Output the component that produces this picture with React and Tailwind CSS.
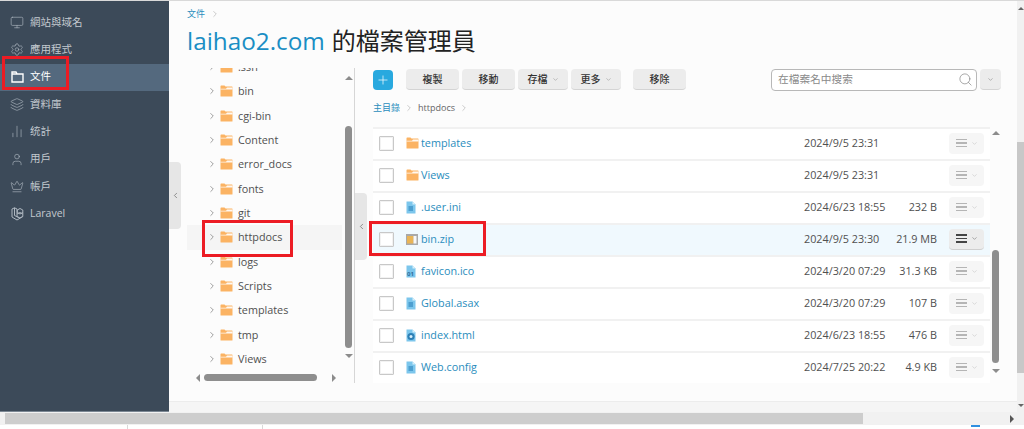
import React from "react";
import { Monitor, Settings, Layers, ChartNoAxesColumn, User, Crown, ChevronRight, ChevronLeft, ChevronDown, Search, Plus } from "lucide-react";

const font = { fontFamily: '"Open Sans","Noto Sans CJK TC",sans-serif' };

function FolderIcon({ className = "" }) {
  return (
    <svg width="13" height="12" viewBox="0 0 13 12" className={className}>
      <path d="M0.5 1.2 Q0.5 0.5 1.2 0.5 H4.5 L5.5 1.6 H12 Q12.5 1.6 12.5 2.2 V11 Q12.5 11.5 12 11.5 H1 Q0.5 11.5 0.5 11 Z" fill="#fbb363" />
      <path d="M0.5 3.7 H6 L7 2.6 H12.5 V4.4 H0.5 Z" fill="#fff" opacity="0.9" />
    </svg>
  );
}

function FileIcon({ kind }) {
  return (
    <svg width="10" height="13" viewBox="0 0 10 13">
      <path d="M0.5 0.5 H6.5 L9.5 3.5 V12.5 H0.5 Z" fill="#7cc6ec" />
      <path d="M6.5 0.5 L9.5 3.5 H6.5 Z" fill="#d7effa" />
      {kind === "text" && <rect x="2.5" y="5" width="4.5" height="5" fill="#4d9fd0" />}
      {kind === "bin" && <text x="1" y="10.5" fontSize="6" fontWeight="700" fill="#2f6f9c" fontFamily="Open Sans">01</text>}
      {kind === "html" && (
        <>
          <circle cx="5" cy="7.5" r="3.6" fill="#2d7fb5" />
          <circle cx="5" cy="7.5" r="1.5" fill="#d7effa" />
        </>
      )}
    </svg>
  );
}

function ZipIcon() {
  return (
    <svg width="12" height="11" viewBox="0 0 12 11">
      <rect width="12" height="11" fill="#a9a9a9" />
      <rect x="1" y="2" width="6.5" height="7.5" fill="#e9b456" />
      <rect x="7.5" y="2" width="3" height="7.5" fill="#f7f7f7" />
    </svg>
  );
}

function LaravelIcon() {
  return (
    <svg width="13" height="14" viewBox="0 0 13 14" fill="none" stroke="#aeb7c0" strokeWidth="1">
      <path d="M1 2 L3.5 0.8 L6 2 V9.5 L8.8 11 L11.8 9.5 V7 L9 5.5 L6 7 M1 2 V10 L6 13 L11.8 9.5 M3.5 0.8 V8.5 L8.8 11 M9 1.5 L11.8 3 V7 M9 1.5 L6.3 3 V5.5 L9 7 L11.8 5.5" />
    </svg>
  );
}

function SideFolder() {
  return (
    <svg width="13" height="12" viewBox="0 0 13 12" fill="none" stroke="#fff" strokeWidth="1.4">
      <path d="M1 1 H5 L6.2 3 H12 V11 H1 Z M1 3 H6.2" />
    </svg>
  );
}

const nav = [
  { label: "網站與域名", icon: <Monitor size={15} strokeWidth={1.1} /> },
  { label: "應用程式", icon: <Settings size={15} strokeWidth={1.1} /> },
  { label: "文件", icon: <SideFolder />, active: true },
  { label: "資料庫", icon: <Layers size={15} strokeWidth={1.1} /> },
  { label: "统計", icon: <ChartNoAxesColumn size={15} strokeWidth={1.1} /> },
  { label: "用戶", icon: <User size={15} strokeWidth={1.1} /> },
  { label: "帳戶", icon: <Crown size={15} strokeWidth={1.1} /> },
  { label: "Laravel", icon: <LaravelIcon /> },
];

const tree = [".ssh", "bin", "cgi-bin", "Content", "error_docs", "fonts", "git", "httpdocs", "logs", "Scripts", "templates", "tmp", "Views"];

const files = [
  { name: "templates", type: "folder", date: "2024/9/5 23:31", size: "" },
  { name: "Views", type: "folder", date: "2024/9/5 23:31", size: "" },
  { name: ".user.ini", type: "text", date: "2024/6/23 18:55", size: "232 B" },
  { name: "bin.zip", type: "zip", date: "2024/9/5 23:30", size: "21.9 MB", active: true },
  { name: "favicon.ico", type: "bin", date: "2024/3/20 07:29", size: "31.3 KB" },
  { name: "Global.asax", type: "text", date: "2024/3/20 07:29", size: "107 B" },
  { name: "index.html", type: "html", date: "2024/6/23 18:55", size: "476 B" },
  { name: "Web.config", type: "text", date: "2024/7/25 20:22", size: "4.9 KB" },
];

function Btn({ label, w, caret }) {
  return (
    <div className={`flex items-center justify-center gap-1 h-[21px] ${w} bg-[#ececec] border-b border-[#d4d4d4] rounded-sm text-[10px] text-[#333] font-medium`}>
      <span>{label}</span>
      {caret && <ChevronDown size={7} strokeWidth={2} className="text-[#999]" />}
    </div>
  );
}

function Tri({ up }) {
  return (
    <div className={`w-0 h-0 border-l-[4px] border-r-[4px] border-l-transparent border-r-transparent ${up ? "border-b-[4px] border-b-[#8c8c8c]" : "border-t-[4px] border-t-[#8c8c8c]"}`} />
  );
}

function FileRow({ f }) {
  return (
    <div className={`flex items-center h-8 border-t-2 pb-[2px] border-[#f1f1f1] ${f.active ? "bg-[#f0f9fe]" : "bg-white"}`}>
      <div className="w-[15px] h-[15px] ml-[6px] border border-[#c8c8c8] rounded-[1px] bg-white shrink-0 shadow-[inset_0_0_0_1px_#f2f2f2]" />
      <div className="w-[15px] ml-3 flex items-center shrink-0">
        {f.type === "folder" ? <FolderIcon /> : f.type === "zip" ? <ZipIcon /> : <FileIcon kind={f.type} />}
      </div>
      <div className="text-[10.8px] text-[#2a8dbd] w-[383px] shrink-0">{f.name}</div>
      <div className="text-[10.8px] text-[#505050] w-[88px] shrink-0 whitespace-nowrap">{f.date}</div>
      <div className="text-[10.8px] text-[#505050] w-[45px] shrink-0 text-right whitespace-nowrap">{f.size}</div>
      <div className={`ml-3 w-[35px] h-[21px] rounded-sm flex items-center justify-center gap-1 shrink-0 ${f.active ? "bg-[#ececec] border-b border-[#cfcfcf]" : "bg-[#f6f6f6]"}`}>
        <div className="flex flex-col gap-[2px]">
          <div className={`w-[11px] h-[1.5px] ${f.active ? "bg-[#444]" : "bg-[#b5b5b5]"}`} />
          <div className={`w-[11px] h-[1.5px] ${f.active ? "bg-[#444]" : "bg-[#b5b5b5]"}`} />
          <div className={`w-[11px] h-[1.5px] ${f.active ? "bg-[#444]" : "bg-[#b5b5b5]"}`} />
        </div>
        <ChevronDown size={7} strokeWidth={2} className={f.active ? "text-[#777]" : "text-[#c4c4c4]"} />
      </div>
    </div>
  );
}

export default function App() {
  return (
    <div style={font} className="relative w-[1024px] h-[429px] overflow-hidden bg-white flex flex-col">
      <div className="h-px bg-[#d9d9d9] shrink-0" />
      <div className="flex h-[411px] shrink-0">
        {/* sidebar */}
        <aside className="w-[169px] shrink-0 bg-[#3c4a59] pt-[8px] border-b border-[#7b8793]">
          {nav.map((n) => (
            <div
              key={n.label}
              className={`flex items-center h-[27.3px] pl-[10px] gap-[6px] text-[10.5px] ${n.active ? "bg-[#54697e] text-white" : "text-[#c3c9cf]"}`}
            >
              <span className="w-[14px] flex justify-center text-[#aeb7c0]">{n.icon}</span>
              <span>{n.label}</span>
            </div>
          ))}
        </aside>

        {/* main */}
        <main className="relative w-[848px] shrink-0 bg-[#fcfcfc] flex flex-col">
          <header className="h-[67px] pl-[18px] shrink-0">
            <div className="flex items-center h-[10px] mt-[8px] gap-[5px] text-[9px] text-[#2a8dbd]">
              <span>文件</span>
              <ChevronRight size={10} strokeWidth={1.2} className="text-[#999]" />
            </div>
            <h1 className="mt-[7px] h-[30px] flex items-center text-[24.3px] leading-none whitespace-nowrap text-[#222]">
              <span className="text-[#1a8ec4]">laihao2.com</span>
              <span className="ml-[7px] text-[24px]">的檔案管理員</span>
            </h1>
          </header>

          <div className="flex h-[315px] shrink-0">
            {/* tree */}
            <div className="w-[176px] ml-[18px] shrink-0 flex flex-col">
              <div className="flex h-[304px]">
                <div className="w-[158px] overflow-hidden shrink-0">
                  <div className="-mt-[13px]">
                    {tree.map((t) => (
                      <div key={t} className={`flex items-center h-[24.33px] pl-[21px] text-[10.8px] text-[#505050] ${t === "httpdocs" ? "bg-[#f5f5f5] mr-[3px]" : ""}`}>
                        <ChevronRight size={10} strokeWidth={1.5} className="text-[#666] -ml-[1px]" />
                        <FolderIcon className="ml-[3px]" />
                        <span className="ml-[5px]">{t}</span>
                      </div>
                    ))}
                  </div>
                </div>
                <div className="w-[7px] flex flex-col items-center shrink-0 pt-[8px]">
                  <Tri up />
                  <div className="w-[7px] h-[222px] mt-[46px] rounded-full bg-[#8e8e8e]" />
                  <div className="mt-[6px]"><Tri /></div>
                </div>
              </div>
              <div className="h-[11px] w-[158px] flex items-center pl-[9px]">
                <div className="w-0 h-0 border-y-[4px] border-y-transparent border-r-[4px] border-r-[#8c8c8c]" />
                <div className="ml-[4px] h-[7px] w-[113px] rounded-full bg-[#8e8e8e]" />
                <div className="ml-[15px] w-0 h-0 border-y-[4px] border-y-transparent border-l-[4px] border-l-[#8c8c8c]" />
              </div>
            </div>

            {/* divider */}
            <div className="w-px ml-[-9px] bg-[#d6d6d6] shrink-0" />

            {/* right pane */}
            <div className="pl-[18px] flex-1 min-w-0">
              <div className="flex items-center h-[21px] mt-px">
                <div className="w-[20px] h-[20px] rounded-sm bg-[#29a9df] flex items-center justify-center">
                  <Plus size={14} strokeWidth={1.2} className="text-white" />
                </div>
                <div className="flex ml-[13px] gap-[3px]">
                  <Btn label="複製" w="w-[53px]" />
                  <Btn label="移動" w="w-[53px]" />
                  <Btn label="存檔" w="w-[50px]" caret />
                  <Btn label="更多" w="w-[50px]" caret />
                </div>
                <div className="ml-[12px]"><Btn label="移除" w="w-[53px]" /></div>
                <div className="ml-[85px] w-[206px] h-[22px] border border-[#b8b8b8] rounded-sm bg-white flex items-center pl-[6px] pr-[3px] text-[10.7px] text-[#8a8a8a]">
                  <span className="flex-1">在檔案名中搜索</span>
                  <Search size={15} strokeWidth={1} className="text-[#777]" />
                </div>
                <div className="ml-[3px] w-[21px] h-[21px] bg-[#ececec] border-b border-[#d4d4d4] rounded-sm flex items-center justify-center">
                  <ChevronDown size={7} strokeWidth={2} className="text-[#888]" />
                </div>
              </div>
              <div className="flex items-center h-[37px] gap-[4px] text-[9px] text-[#666] pb-[1px]">
                <span className="text-[#2a8dbd]">主目錄</span>
                <ChevronRight size={10} strokeWidth={1.2} className="text-[#999]" />
                <span>httpdocs</span>
                <ChevronRight size={10} strokeWidth={1.2} className="text-[#999]" />
              </div>
              <div className="flex">
                <div className="w-[617px] shrink-0">
                  {files.map((f) => (
                    <FileRow key={f.name} f={f} />
                  ))}
                </div>
                <div className="ml-[2px] w-[7px] flex flex-col items-center pt-[4px]">
                  <Tri up />
                  <div className="w-[7px] h-[113px] mt-[115px] rounded-full bg-[#8e8e8e]" />
                  <div className="mt-[6px]"><Tri /></div>
                </div>
              </div>
            </div>
          </div>

          <div className="h-[18px] shrink-0" />
          <div className="flex-1 bg-[#f5f5f5] border-t border-[#ececec]" />

          {/* collapse handles */}
          <div className="absolute left-0 top-[161px] w-[12px] h-[67px] rounded-r-sm bg-[#e6e6e6] flex items-center justify-center">
            <ChevronLeft size={9} strokeWidth={1.6} className="text-[#555]" />
          </div>
          <div className="absolute left-[186px] top-[192px] w-[12px] h-[67px] rounded-r-sm bg-[#e6e6e6] flex items-center justify-center">
            <ChevronLeft size={9} strokeWidth={1.6} className="text-[#555]" />
          </div>
        </main>

        {/* outer scrollbar */}
        <div className="w-[7px] shrink-0 bg-[#f1f1f1] flex flex-col items-center">
          <div className="h-[141px] shrink-0 pt-[6px]">
            <div className="w-0 h-0 border-l-[3px] border-r-[3px] border-l-transparent border-r-transparent border-b-[3px] border-b-[#666]" />
          </div>
          <div className="w-[7px] h-[231px] bg-[#c8c8c8] shrink-0" />
          <div className="mt-[31px] w-0 h-0 border-l-[3px] border-r-[3px] border-l-transparent border-r-transparent border-t-[3px] border-t-[#666]" />
        </div>
      </div>

      {/* bottom scrollbar */}
      <div className="h-[13px] shrink-0 bg-[#f1f1f1] flex items-center pl-[5px] pr-[10px]">
        <div className="w-[858px] h-[11px] bg-[#cdcdcd]" />
        <div className="ml-auto w-0 h-0 border-y-[4px] border-y-transparent border-l-[4px] border-l-[#555]" />
      </div>

      {/* status strip */}
      <div className="flex-1 bg-white flex">
        <div className="ml-[127px] w-px bg-[#d9d9d9]" />
        <div className="ml-[134px] w-px bg-[#d9d9d9]" />
        <div className="ml-[708px] w-[9px] h-[2px] bg-[#2f8fe0]" />
      </div>

      {/* red annotation boxes */}
      <div className="absolute left-[2px] top-[56px] w-[67px] h-[34px] border-[3px] border-[#ec1c24]" />
      <div className="absolute left-[202px] top-[220px] w-[91px] h-[37px] border-[3px] border-[#ec1c24]" />
      <div className="absolute left-[369px] top-[221px] w-[117px] h-[35px] border-[3px] border-[#ec1c24]" />
    </div>
  );
}
